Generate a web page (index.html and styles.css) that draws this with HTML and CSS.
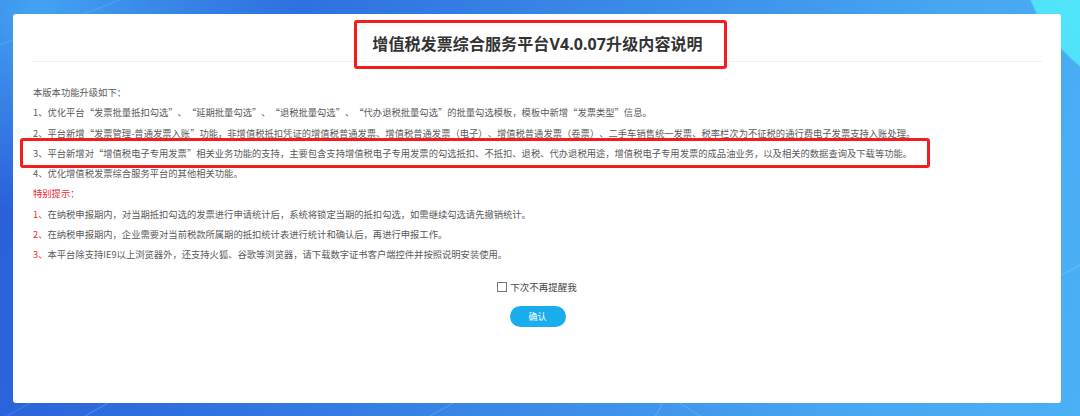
FILE: index.html
```html
<!DOCTYPE html>
<html lang="zh-CN">
<head>
<meta charset="utf-8">
<title>增值税发票综合服务平台V4.0.07升级内容说明</title>
<link rel="stylesheet" href="styles.css">
</head>
<body>
<div class="bg">
  <svg class="deco" width="1080" height="416" viewBox="0 0 1080 416">
    <path d="M0 45 L120 0" stroke="#5fb6f5" stroke-opacity="0.45" stroke-width="1.2" fill="none"/>
    <path d="M0 420 L160 330" stroke="#5fb6f5" stroke-opacity="0.35" stroke-width="1" fill="none"/>
    <path d="M85 416 L110 402" stroke="#6ac0f6" stroke-opacity="0.5" stroke-width="1" fill="none"/>
    <path d="M430 416 L455 402" stroke="#6ac0f6" stroke-opacity="0.5" stroke-width="1" fill="none"/>
    <path d="M655 416 C 660 410 662 405 662 400" stroke="#6ac0f6" stroke-opacity="0.6" stroke-width="1" fill="none"/>
    <path d="M680 403 L700 416" stroke="#6ac0f6" stroke-opacity="0.6" stroke-width="1" fill="none"/>
    <path d="M1062 275 L1080 265" stroke="#7fd0f8" stroke-opacity="0.6" stroke-width="1" fill="none"/>
  </svg>
  <div class="card">
    <div class="header">
      <h1 class="title">增值税发票综合服务平台V4.0.07升级内容说明</h1>
      <span class="mark mark-title"></span>
    </div>
    <div class="content">
      <p class="line">本版本功能升级如下：</p>
      <p class="line">1、优化平台“发票批量抵扣勾选”、“延期批量勾选”、“退税批量勾选”、“代办退税批量勾选”的批量勾选模板，模板中新增“发票类型”信息。</p>
      <p class="line">2、平台新增“发票管理-普通发票入账”功能，非增值税抵扣凭证的增值税普通发票、增值税普通发票（电子）、增值税普通发票（卷票）、二手车销售统一发票、税率栏次为不征税的通行费电子发票支持入账处理。</p>
      <p class="line marked">3、平台新增对“增值税电子专用发票”相关业务功能的支持，主要包含支持增值税电子专用发票的勾选抵扣、不抵扣、退税、代办退税用途，增值税电子专用发票的成品油业务，以及相关的数据查询及下载等功能。</p>
      <p class="line">4、优化增值税发票综合服务平台的其他相关功能。</p>
      <p class="line red">特别提示：</p>
      <p class="line"><span class="red">1、</span>在纳税申报期内，对当期抵扣勾选的发票进行申请统计后，系统将锁定当期的抵扣勾选，如需继续勾选请先撤销统计。</p>
      <p class="line"><span class="red">2、</span>在纳税申报期内，企业需要对当前税款所属期的抵扣统计表进行统计和确认后，再进行申报工作。</p>
      <p class="line"><span class="red">3、</span>本平台除支持IE9以上浏览器外，还支持火狐、谷歌等浏览器，请下载数字证书客户端控件并按照说明安装使用。</p>
    </div>
    <div class="footer">
      <label class="remember"><span class="box"></span>下次不再提醒我</label>
      <button class="ok">确认</button>
    </div>
  </div>
</div>
</body>
</html>
```

FILE: styles.css
```css
html, body {
  margin: 0;
  padding: 0;
}
body {
  width: 1080px;
  height: 416px;
  overflow: hidden;
  font-family: "Noto Sans CJK SC", "Noto Sans", sans-serif;
  text-spacing-trim: space-all;
}
.bg {
  position: relative;
  width: 1080px;
  height: 416px;
  padding: 14px 0 0 13px;
  box-sizing: border-box;
  background:
    radial-gradient(circle at 1180px -60px, #55eafb 0, #50e2fa 160px, rgba(80,200,250,0) 162px),
    radial-gradient(ellipse 260px 200px at 40px 10px, rgba(70,170,245,0.9), rgba(70,170,245,0) 100%),
    linear-gradient(105deg, #2a5cd9 0%, #2f70e0 25%, #3b8ce9 55%, #47a6f2 80%, #4bb0f6 100%);
}
.deco {
  position: absolute;
  left: 0;
  top: 0;
}
.card {
  position: relative;
  width: 1048px;
  height: 389px;
  background: #fff;
  border-radius: 3px;
  box-sizing: border-box;
}
.header {
  height: 48px;
  margin: 0 19px 0 20px;
  border-bottom: 1px solid #f0f0f0;
  display: flex;
  align-items: flex-end;
  justify-content: center;
  padding-bottom: 6px;
  box-sizing: border-box;
}
.title {
  margin: 0;
  font-size: 16px;
  line-height: 22px;
  font-weight: bold;
  color: #333;
  font-family: "Noto Sans", "Noto Sans CJK SC", sans-serif;
  letter-spacing: 0.1px;
}
.mark {
  position: absolute;
  border: 3px solid #f31d1d;
  border-radius: 3px;
  box-sizing: border-box;
}
.mark-title {
  left: 341px;
  top: 6px;
  width: 373px;
  height: 49px;
}
.content {
  padding: 20px 0 0 20px;
}
.line {
  margin: 0;
  font-size: 9.3px;
  line-height: 20.3px;
  height: 20.3px;
  color: #5a5a5a;
  white-space: nowrap;
}
.marked {
  position: relative;
}
.marked::after {
  content: "";
  position: absolute;
  left: -13px;
  top: -5px;
  width: 910px;
  height: 30px;
  border: 3px solid #f31d1d;
  border-radius: 3px;
  box-sizing: border-box;
}
.red {
  color: #f5282a;
}
.footer {
  display: flex;
  flex-direction: column;
  align-items: center;
  padding-top: 16px;
}
.remember {
  display: flex;
  align-items: center;
  gap: 3px;
  font-size: 9.5px;
  line-height: 12px;
  color: #444;
}
.box {
  width: 8px;
  height: 8px;
  border: 1px solid #777;
  background: #fff;
}
.ok {
  margin-top: 13px;
  width: 56px;
  height: 21px;
  border: none;
  border-radius: 11px;
  background: #1aadee;
  color: #fff;
  font-family: "Noto Sans CJK SC", sans-serif;
  font-size: 9px;
  padding: 0;
  margin-left: 1px;
}
```
